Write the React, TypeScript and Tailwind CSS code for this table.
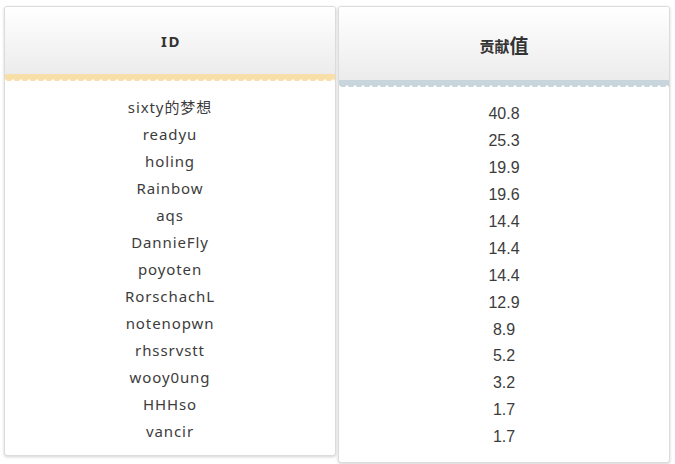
const ids = [
  "sixty的梦想",
  "readyu",
  "holing",
  "Rainbow",
  "aqs",
  "DannieFly",
  "poyoten",
  "RorschachL",
  "notenopwn",
  "rhssrvstt",
  "wooy0ung",
  "HHHso",
  "vancir",
];

const scores = ["40.8", "25.3", "19.9", "19.6", "14.4", "14.4", "14.4", "12.9", "8.9", "5.2", "3.2", "1.7", "1.7"];

export default function App() {
  return (
    <div className="w-[675px] h-[464px] bg-white flex items-start gap-[2px] pl-[4px] pt-[6px] font-['Noto_Sans','Noto_Sans_CJK_SC',sans-serif] text-[#3c3c3c]">
      {/* ID column */}
      <div className="w-[332px] bg-white border border-[#dcdcdc] rounded-[3px] shadow-[0_1px_3px_rgba(0,0,0,0.18)] overflow-hidden">
        <div className="h-[67px] flex items-center justify-center bg-gradient-to-b from-white to-[#ececec]">
          <span className="text-[15px] font-bold tracking-[1.5px] text-[#333] mt-[2px] ml-[2px]">ID</span>
        </div>
        <div className="h-[3px] bg-[#f8dfa8]" />
        <div className="h-[5px] bg-[radial-gradient(circle_at_50%_0,#f8dfa8_4px,transparent_4.5px)] bg-[length:8px_5px]" />
        <div className="pt-[12px] pb-[10px] flex flex-col">
          {ids.map((id, i) => (
            <div key={i} className="h-[27px] flex items-center justify-center text-[15px] tracking-[0.9px]">
              {id}
            </div>
          ))}
        </div>
      </div>

      {/* score column */}
      <div className="w-[332px] bg-white border border-[#dcdcdc] rounded-[3px] shadow-[0_1px_3px_rgba(0,0,0,0.18)] overflow-hidden">
        <div className="h-[73px] flex items-center justify-center bg-gradient-to-b from-white to-[#ececec]">
          <span className="text-[#333] mt-[4px] flex items-end">
            <span className="text-[15px] font-bold">贡献</span>
            <span className="text-[19px] font-bold leading-[24px]">值</span>
          </span>
        </div>
        <div className="h-[3px] bg-[#c9d5dc]" />
        <div className="h-[5px] bg-[radial-gradient(circle_at_50%_0,#c9d5dc_4px,transparent_4.5px)] bg-[length:8px_5px]" />
        <div className="pt-[13px] pb-[11px] flex flex-col font-['Liberation_Sans','Noto_Sans_CJK_SC',sans-serif]">
          {scores.map((s, i) => (
            <div key={i} className="h-[26.9px] flex items-center justify-center text-[16px]">
              {s}
            </div>
          ))}
        </div>
      </div>
    </div>
  );
}
